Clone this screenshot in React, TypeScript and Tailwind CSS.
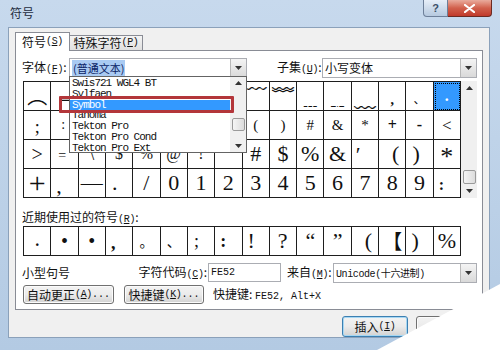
import React from "react";

const cjk = "font-['Noto_Sans_CJK_SC','Noto_Sans',sans-serif]";
const mono = "font-['Liberation_Mono','Noto_Sans_CJK_SC',monospace]";
const serif = "font-['Liberation_Serif','Noto_Sans_CJK_SC',serif]";

type C = [string, string?, boolean?];

const mainRows: C[][] = [
  [
    ["︵", `${cjk} text-[20px]`],
    ["﹁", `${cjk} text-[16px]`],
    [""], [""], [""], [""], [""], [""],
    ["﹋", `${cjk} text-[22px]`],
    ["﹌", `${cjk} text-[22px]`],
    ["﹍", `${cjk} text-[22px]`],
    ["﹎", `${cjk} text-[22px]`],
    ["﹏", `${cjk} text-[22px]`],
    [",", `${serif} text-[14px] font-bold pt-[8px]`],
    ["、", `${cjk} text-[12px] pt-[6px]`],
    [".", `${serif} text-[16px] font-bold`, true],
  ],
  [
    [";", `${serif} text-[18px] pt-[4px]`],
    [":", `${serif} text-[14px] justify-start pl-[10px]`],
    [""], [""], [""], [""], [""], [""],
    ["(", `${serif} text-[15px]`],
    [")", `${serif} text-[15px]`],
    ["#", `${serif} text-[15px]`],
    ["&", `${serif} text-[15px]`],
    ["*", `${serif} text-[15px]`],
    ["+", `${serif} text-[16px] font-bold`],
    ["-", `${serif} text-[16px] font-bold`],
    ["<", `${serif} text-[17px]`],
  ],
  [
    [">", `${serif} text-[20px]`],
    ["=", `${serif} text-[14px] justify-start pl-[7px] pt-[4px]`],
    ["\\", `${serif} text-[18px]`],
    ["$", `${serif} text-[16px]`],
    ["%", `${serif} text-[16px]`],
    ["@", `${serif} text-[16px]`],
    ["!", `${serif} text-[16px]`],
    [""],
    ["#", `${serif} text-[22px]`],
    ["$", `${serif} text-[22px]`],
    ["%", `${serif} text-[22px]`],
    ["&", `${serif} text-[22px]`],
    ["′", `${serif} text-[22px] justify-start items-start pl-[4px] pt-[4px]`],
    ["(", `${serif} text-[22px] justify-end pr-[6px]`],
    [")", `${serif} text-[22px] justify-start pl-[6px]`],
    ["*", `${serif} text-[26px] pt-[6px]`],
  ],
  [
    ["+", `${serif} text-[30px]`],
    [",", `${serif} text-[22px] justify-start pl-[5px] pt-[6px]`],
    ["—", `${serif} text-[22px]`],
    [".", `${serif} text-[22px] justify-start pl-[6px]`],
    ["/", `${serif} text-[22px]`],
    ...["0", "1", "2", "3", "4", "5", "6", "7", "8", "9"].map((d): C => [d, `${serif} text-[22px]`]),
    [":", `${serif} text-[16px] font-bold justify-start pl-[5px] pt-[4px]`],
  ],
];

const recent: C[] = [
  [".", `${serif} text-[16px] font-bold`],
  ["•", `${serif} text-[20px]`],
  ["•", `${serif} text-[20px]`],
  [",", `${serif} text-[18px] font-bold justify-start pl-[5px] pt-[4px]`],
  ["。", `${cjk} text-[14px]`],
  ["、", `${cjk} text-[14px]`],
  [";", `${serif} text-[18px] justify-start pl-[6px]`],
  [":", `${serif} text-[18px] font-bold justify-start pl-[5px]`],
  ["!", `${serif} text-[22px] justify-start pl-[5px]`],
  ["?", `${serif} text-[22px] justify-start pl-[8px]`],
  ["“", `${serif} text-[22px]`],
  ["”", `${serif} text-[22px]`],
  ["(", `${serif} text-[22px] justify-end pr-[6px]`],
  ["【", `${cjk} text-[20px]`],
  [")", `${serif} text-[22px] justify-start pl-[5px]`],
  ["%", `${serif} text-[22px]`],
];

function Cell({ c }: { c: C }) {
  const [ch, cls = "", sel] = c;
  return (
    <div
      className={`flex items-center justify-center overflow-hidden border-r border-b border-[#1e1e1e] leading-none ${
        sel ? "bg-[#3399ff] text-white outline outline-1 outline-dotted outline-black -outline-offset-2" : "text-[#111]"
      } ${cls}`}
    >
      {ch}
    </div>
  );
}

function Key({ k }: { k: string }) {
  return (
    <span className={`${mono} text-[10px] tracking-[-0.3px]`}>
      (<span className="underline">{k}</span>)
    </span>
  );
}

function Arrow({ up = false }: { up?: boolean }) {
  return (
    <svg width="7" height="4" viewBox="0 0 7 4">
      <path d={up ? "M0 4h7L3.5 0z" : "M0 0h7L3.5 4z"} fill="#333" />
    </svg>
  );
}

function Combo({ w, children }: { w: string; children: React.ReactNode }) {
  return (
    <div className={`flex h-[20px] shrink-0 items-center border border-[#abadb3] bg-white ${w}`}>
      <div className="flex-1 truncate pl-[2px]">{children}</div>
      <div className="flex h-full w-[16px] items-center justify-center border-l border-[#b8b8b8] bg-gradient-to-b from-[#f4f4f4] to-[#d9d9d9]">
        <Arrow />
      </div>
    </div>
  );
}

function Btn({ w, children, def = false }: { w: string; children: React.ReactNode; def?: boolean }) {
  return (
    <div
      className={`flex shrink-0 items-center justify-center whitespace-nowrap rounded-[3px] border bg-gradient-to-b from-[#f3f3f3] via-[#ebebeb] to-[#d2d2d2] ${cjk} text-[12px] leading-none ${
        def ? "border-[#3c7fb1] shadow-[inset_0_0_0_1px_#a6d7f3]" : "border-[#707070] shadow-[inset_0_0_0_1px_#fbfbfb]"
      } ${w}`}
    >
      {children}
    </div>
  );
}

function ScrollBar({ h }: { h: string }) {
  return (
    <div className={`flex w-[16px] flex-col items-center bg-[#f0f0f0] ${h}`}>
      <div className="flex h-[14px] items-center"><Arrow up /></div>
      <div className="flex-1" />
      <div className="h-[14px] w-[13px] rounded-[2px] border border-[#9a9a9a] bg-gradient-to-r from-[#f5f5f5] to-[#dcdcdc]" />
      <div className="flex h-[14px] items-center"><Arrow /></div>
    </div>
  );
}

const fonts = ["Swis721 WGL4 BT", "Sylfaen", "Symbol", "Tahoma", "Tekton Pro", "Tekton Pro Cond", "Tekton Pro Ext"];

export default function App() {
  return (
    <div className="relative h-[350px] w-[500px] overflow-hidden bg-gradient-to-b from-[#c7d9ed] to-[#b3cae3] text-[#111]">
      {/* title bar */}
      <div className="flex h-[27px] items-start justify-between">
        <span className={`${cjk} pl-[10px] pt-[5px] text-[12px] leading-[16px] text-[#1e2b3c]`}>符号</span>
        <div className="mr-[8px] flex">
          <div className="flex h-[17px] w-[25px] items-center justify-center rounded-bl-[4px] border border-t-0 border-[#6d7f99] bg-gradient-to-b from-[#e6eef8] to-[#b6c9df] font-['Liberation_Sans',sans-serif] text-[11px] font-bold text-[#3b4f68]">
            ?
          </div>
          <div className="flex h-[17px] w-[44px] items-center justify-center rounded-br-[4px] border border-l-0 border-t-0 border-[#6b2a22] bg-gradient-to-b from-[#e9ab9d] via-[#d1604c] to-[#c0392b]">
            <svg width="11" height="9" viewBox="0 0 11 9">
              <path d="M1 1l9 7M10 1L1 8" stroke="#fff" strokeWidth="2.2" strokeLinecap="round" />
            </svg>
          </div>
        </div>
      </div>

      {/* client area */}
      <div className="ml-[8px] mr-[10px] h-[311px] border border-[#8ba1ba] bg-[#f0f0f0]">
        {/* tabs */}
        <div className="flex h-[22px] items-end pl-[6px]">
          <div className={`relative z-10 -mb-px flex h-[19px] w-[55px] items-center justify-center whitespace-nowrap border border-b-0 border-[#898c95] bg-white ${cjk} text-[12px] leading-none`}>
            符号<Key k="S" />
          </div>
          <div className={`flex h-[15px] w-[73px] items-center justify-center whitespace-nowrap border border-b-0 border-l-0 border-[#898c95] bg-gradient-to-b from-[#f4f4f4] to-[#e0e0e0] ${cjk} text-[12px] leading-none`}>
            特殊字符<Key k="P" />
          </div>
        </div>

        {/* tab page */}
        <div className={`ml-[6px] h-[260px] w-[468px] border border-[#898c95] bg-white pl-[6px] ${cjk} text-[12px]`}>
          <div className="mt-[7px] flex h-[20px] items-center whitespace-nowrap">
            <span className="w-[47px] shrink-0 leading-none">字体<Key k="F" />:</span>
            <Combo w="w-[178px]">
              <span className="bg-[#a9caf2] px-[1px] text-[11px] leading-[14px] text-[#0b2466]">(普通文本)</span>
            </Combo>
            <span className="ml-[30px] w-[45px] shrink-0 leading-none">子集<Key k="U" />:</span>
            <Combo w="w-[155px]">
              <span className="text-[12px] leading-none">小写变体</span>
            </Combo>
          </div>

          <div className="ml-[1px] mt-[3px] flex">
            <div className="grid h-[117px] w-[438px] grid-cols-[repeat(16,minmax(0,1fr))] grid-rows-[repeat(4,minmax(0,1fr))] border-l border-t border-[#1e1e1e]">
              {mainRows.flat().map((c, i) => (
                <Cell key={i} c={c} />
              ))}
            </div>
            <ScrollBar h="h-[117px]" />
          </div>

          <div className="mt-[12px] h-[14px] whitespace-nowrap leading-[14px]">
            近期使用过的符号<Key k="R" />:
          </div>
          <div className="ml-[1px] mt-[2px] grid h-[30px] w-[438px] grid-cols-[repeat(16,minmax(0,1fr))] border-l border-t border-[#1e1e1e]">
            {recent.map((c, i) => (
              <Cell key={i} c={c} />
            ))}
          </div>

          <div className="mt-[7px] flex h-[19px] items-center whitespace-nowrap leading-none">
            <span className="w-[116px] shrink-0">小型句号</span>
            <div className="flex w-[69px] shrink-0 justify-end">
              <span>字符代码<Key k="C" />:</span>
            </div>
            <div className={`ml-[1px] flex h-[19px] w-[73px] shrink-0 items-center border border-[#abadb3] bg-white pl-[2px] ${mono} text-[10px]`}>FE52</div>
            <span className="ml-[6px] w-[46px] shrink-0">来自<Key k="M" />:</span>
            <Combo w="w-[144px]">
              <span className={`${mono} text-[10px] tracking-[-0.4px]`}>Unicode(十六进制)</span>
            </Combo>
          </div>

          <div className="ml-[1px] mt-[3px] flex h-[19px] items-center whitespace-nowrap">
            <Btn w="h-[19px] w-[91px]">
              自动更正<Key k="A" /><span className={`${mono} text-[10px]`}>...</span>
            </Btn>
            <Btn w="ml-[10px] h-[19px] w-[80px]">
              快捷键<Key k="K" /><span className={`${mono} text-[10px]`}>...</span>
            </Btn>
            <span className="ml-[9px] leading-none">
              快捷键: <span className={`${mono} text-[10px]`}>FE52, Alt+X</span>
            </span>
          </div>
        </div>

        {/* dialog buttons */}
        <div className="mt-[6px] flex pl-[333px]">
          <Btn w="h-[21px] w-[66px]" def>
            插入<Key k="I" />
          </Btn>
          <Btn w="ml-[8px] h-[21px] w-[66px]">取消</Btn>
        </div>
      </div>

      {/* open font list */}
      <div className="absolute left-[69px] top-[76px] flex h-[77px] w-[178px] border border-[#646464] bg-white">
        <div className={`flex-1 pt-[1px] ${mono} text-[11px] tracking-[-1px]`}>
          {fonts.map((f) => (
            <div
              key={f}
              className={`h-[10.8px] whitespace-nowrap pl-[2px] leading-[11px] ${f === "Symbol" ? "bg-[#3399ff] text-white" : "text-[#111]"}`}
            >
              {f}
            </div>
          ))}
        </div>
        <div className="flex w-[16px] flex-col items-center bg-[#f0f0f0]">
          <div className="flex h-[12px] items-center"><Arrow up /></div>
          <div className="h-[29px]" />
          <div className="h-[13px] w-[13px] rounded-[2px] border border-[#9a9a9a] bg-gradient-to-r from-[#f5f5f5] to-[#dcdcdc]" />
          <div className="flex-1" />
          <div className="flex h-[12px] items-center"><Arrow /></div>
        </div>
      </div>

      {/* red highlight around Symbol */}
      <div className="absolute left-[59px] top-[96px] h-[17px] w-[175px] rounded-[1px] border-[3px] border-[#b3363a]" />

      {/* page corner */}
      <div className="absolute left-[377px] top-[284px] h-[66px] w-[123px] bg-white [clip-path:polygon(0_100%,100%_0,100%_100%)]" />
    </div>
  );
}
